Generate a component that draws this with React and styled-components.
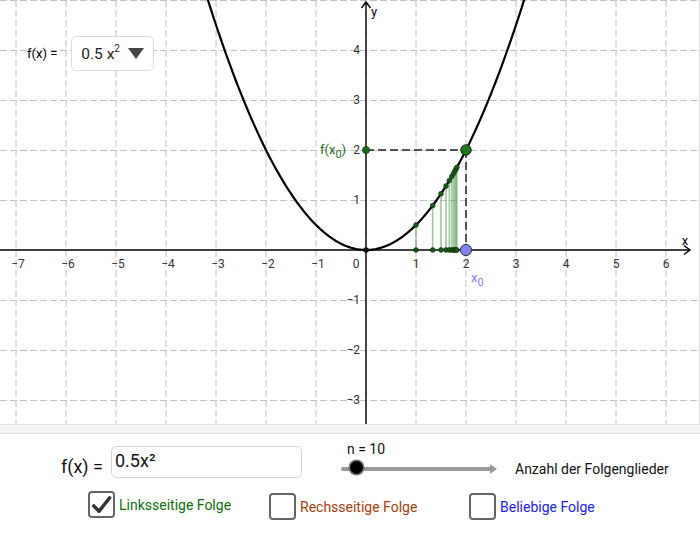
import React from "react";
import styled, { createGlobalStyle } from "styled-components";

const GlobalStyle = createGlobalStyle`
  html, body {
    margin: 0;
    padding: 0;
    background: #ffffff;
    font-family: Roboto, "Noto Sans", sans-serif;
  }
`;

const OX = 366;
const OY = 250;
const S = 50;

const px = (x) => OX + x * S;
const py = (y) => OY - y * S;

const curve = (() => {
  const pts = [];
  for (let x = -3.3; x <= 3.3001; x += 0.05) {
    pts.push(`${px(x).toFixed(1)},${py(0.5 * x * x).toFixed(1)}`);
  }
  return "M" + pts.join(" L");
})();

const seq = Array.from({ length: 10 }, (_, i) => (2 * (i + 1)) / (i + 2));

function Graph() {
  const vGrid = [];
  for (let k = -7; k <= 6; k++) vGrid.push(px(k));
  const hGrid = [0, 50, 100, 150, 200, 300, 350, 400];
  const xLabels = [-7, -6, -5, -4, -3, -2, -1, 1, 2, 3, 4, 5, 6];
  const yLabels = [4, 3, 2, 1, -1, -2, -3];

  return (
    <svg width="700" height="424" viewBox="0 0 700 424">
      <g stroke="#c0c0c0" strokeWidth="1" strokeDasharray="7 3">
        {vGrid.map((x) => (
          <line key={"v" + x} x1={x} y1="0" x2={x} y2="424" />
        ))}
        {hGrid.map((y) => (
          <line key={"h" + y} x1="0" y1={y + 0.5} x2="700" y2={y + 0.5} />
        ))}
      </g>

      {/* axes */}
      <g stroke="#000" strokeWidth="1.4" fill="none">
        <line x1="0" y1={OY} x2="690" y2={OY} />
        <polyline points="684,245.5 690,250 684,254.5" />
        <line x1={OX} y1="424" x2={OX} y2="2" />
        <polyline points="361.5,8 366,2 370.5,8" />
      </g>

      <g fontFamily="Roboto, 'DejaVu Sans', sans-serif" fontSize="12" fill="#333">
        {xLabels.map((k) => (
          <text key={"xl" + k} x={px(k) + (k < 0 ? 2 : 0)} y="268" textAnchor="middle">
            {k < 0 ? "\u2212" + -k : k}
          </text>
        ))}
        <text x="356" y="268" textAnchor="middle">0</text>
        {yLabels.map((k) => (
          <text key={"yl" + k} x="360" y={py(k) + 4} textAnchor="end">
            {k < 0 ? "\u2212" + -k : k}
          </text>
        ))}
        <text x="685" y="245" textAnchor="middle" fontSize="13" fill="#000">x</text>
        <text x="374" y="16" textAnchor="middle" fontSize="13" fill="#000">y</text>
      </g>

      {/* sequence segments */}
      <g stroke="#4f9a4f" strokeOpacity="0.55" strokeWidth="1.6">
        {seq.map((x) => (
          <line key={"s" + x} x1={px(x)} y1={OY} x2={px(x)} y2={py(0.5 * x * x)} />
        ))}
      </g>

      <path d={curve} fill="none" stroke="#000" strokeWidth="2.2" />

      {/* dashed helper lines */}
      <g stroke="#222" strokeWidth="1.5" strokeDasharray="8 4" fill="none">
        <line x1={OX} y1={py(2)} x2={px(2)} y2={py(2)} />
        <line x1={px(2)} y1={py(2)} x2={px(2)} y2={OY} />
      </g>

      {/* sequence points */}
      <g fill="#1a5c1a" stroke="#0a2a0a" strokeWidth="0.6">
        {seq.map((x) => (
          <React.Fragment key={"p" + x}>
            <circle cx={px(x)} cy={OY} r="2.4" />
            <circle cx={px(x)} cy={py(0.5 * x * x)} r="2.4" />
          </React.Fragment>
        ))}
      </g>

      <circle cx={OX} cy={OY} r="2.8" fill="#111" />
      <circle cx={OX} cy={py(2)} r="3.6" fill="#1a6a1a" stroke="#0a2a0a" strokeWidth="0.6" />
      <circle cx={px(2)} cy={py(2)} r="5.2" fill="#1e7a1e" stroke="#0a2a0a" strokeWidth="1" />
      <circle cx={px(2)} cy={OY} r="5.6" fill="#8080ff" stroke="#333" strokeWidth="1" />

      <text x="320" y="154" fontFamily="Roboto, sans-serif" fontSize="13" fill="#1e6e1e">
        f(x<tspan dy="4" fontSize="11">0</tspan><tspan dy="-4">)</tspan>
      </text>
      <text x="471" y="282" fontFamily="Roboto, sans-serif" fontSize="13" fill="#8080ff">
        x<tspan dy="4" fontSize="11">0</tspan>
      </text>
    </svg>
  );
}

function App() {
  return (
    <Page>
      <GlobalStyle />
      <GraphArea>
        <Graph />
        <FunctionPicker>
          <PickerLabel>f(x) =</PickerLabel>
          <PickerBox>
            <span>
              0.5 x<sup>2</sup>
            </span>
            <Caret />
          </PickerBox>
        </FunctionPicker>
      </GraphArea>
      <Divider />
      <Controls>
        <TopRow>
          <InputLabel>f(x) =</InputLabel>
          <InputField>0.5x²</InputField>
          <SliderGroup>
            <SliderValue>n = 10</SliderValue>
            <SliderTrack>
              <SliderThumb />
            </SliderTrack>
          </SliderGroup>
          <SliderCaption>Anzahl der Folgenglieder</SliderCaption>
        </TopRow>
        <CheckRow>
          <Option $w={181}>
            <Box>
              <svg width="23" height="23" viewBox="0 0 24 24">
                <path
                  d="M4 13.5 L9.5 19 L20.5 5"
                  fill="none"
                  stroke="#333"
                  strokeWidth="3.6"
                  strokeLinecap="round"
                  strokeLinejoin="round"
                />
              </svg>
            </Box>
            <OptionText $color="#0d700d">Linksseitige Folge</OptionText>
          </Option>
          <Option $w={200} $down>
            <Box />
            <OptionText $color="#a3400c">Rechsseitige Folge</OptionText>
          </Option>
          <Option $down>
            <Box />
            <OptionText $color="#2020f5">Beliebige Folge</OptionText>
          </Option>
        </CheckRow>
      </Controls>
    </Page>
  );
}

export default App;

const Page = styled.div`
  width: 700px;
  height: 550px;
  overflow: hidden;
  background: #fff;
`;

const GraphArea = styled.div`
  position: relative;
  width: 700px;
  height: 424px;
  border-right: 1px solid #ddd;
  box-sizing: border-box;

  svg {
    display: block;
  }
`;

const FunctionPicker = styled.div`
  position: absolute;
  left: 27px;
  top: 36px;
  display: flex;
  align-items: center;
  gap: 14px;
`;

const PickerLabel = styled.span`
  font-size: 13px;
  color: #000;
`;

const PickerBox = styled.div`
  width: 83px;
  height: 35px;
  box-sizing: border-box;
  border: 1.5px solid #dcdcdc;
  border-radius: 5px;
  background: #fff;
  display: flex;
  align-items: center;
  justify-content: space-between;
  padding: 0 9px 0 9px;
  font-size: 15.5px;
  color: #222;

  sup {
    font-size: 10px;
    vertical-align: 7px;
    line-height: 0;
  }
`;

const Caret = styled.span`
  width: 0;
  height: 0;
  border-left: 8px solid transparent;
  border-right: 8px solid transparent;
  border-top: 11px solid #444;
`;

const Divider = styled.div`
  height: 8px;
  background: #f4f4f4;
  border-top: 1px solid #e2e2e2;
  border-bottom: 1px solid #dadada;
`;

const Controls = styled.div`
  display: flex;
  flex-direction: column;
`;

const TopRow = styled.div`
  display: flex;
  align-items: flex-start;
  padding: 8px 0 0 61px;
  height: 50px;
  box-sizing: border-box;
`;

const InputLabel = styled.span`
  font-size: 18px;
  color: #111;
  margin-top: 14px;
  width: 50px;
`;

const InputField = styled.div`
  width: 191px;
  height: 32px;
  box-sizing: border-box;
  margin-top: 4px;
  border: 1.5px solid #d5d5d5;
  border-radius: 5px;
  padding: 3px 0 0 3px;
  font-size: 18px;
  color: #111;
`;

const SliderGroup = styled.div`
  display: flex;
  flex-direction: column;
  margin-left: 39px;
  width: 174px;
`;

const SliderValue = styled.span`
  font-size: 14px;
  color: #111;
  padding-left: 6px;
  height: 19px;
  margin-top: -1px;
`;

const SliderTrack = styled.div`
  position: relative;
  margin-top: 7px;
  width: 150px;
  height: 4px;
  border-radius: 2px;
  background: #999;

  &::after {
    content: "";
    position: absolute;
    right: -6px;
    top: -3px;
    border-left: 7px solid #999;
    border-top: 5px solid transparent;
    border-bottom: 5px solid transparent;
  }
`;

const SliderThumb = styled.span`
  position: absolute;
  left: 9px;
  top: -6px;
  width: 13px;
  height: 13px;
  border-radius: 50%;
  background: #000;
  box-shadow: 0 0 0 1.5px #777;
`;

const SliderCaption = styled.span`
  margin-top: 19px;
  font-size: 14px;
  color: #111;
`;

const CheckRow = styled.div`
  display: flex;
  align-items: flex-start;
  padding: 7px 0 0 88px;
`;

const Option = styled.div`
  display: flex;
  align-items: center;
  gap: 4px;
  width: ${(p) => (p.$w ? p.$w + "px" : "auto")};
  margin-top: ${(p) => (p.$down ? "2px" : "0")};
`;

const Box = styled.div`
  width: 27px;
  height: 27px;
  box-sizing: border-box;
  border: 2px solid #666;
  border-radius: 4px;
  background: #fff;
  display: flex;
  align-items: center;
  justify-content: center;
`;

const OptionText = styled.span`
  font-size: 14px;
  color: ${(p) => p.$color};
`;
